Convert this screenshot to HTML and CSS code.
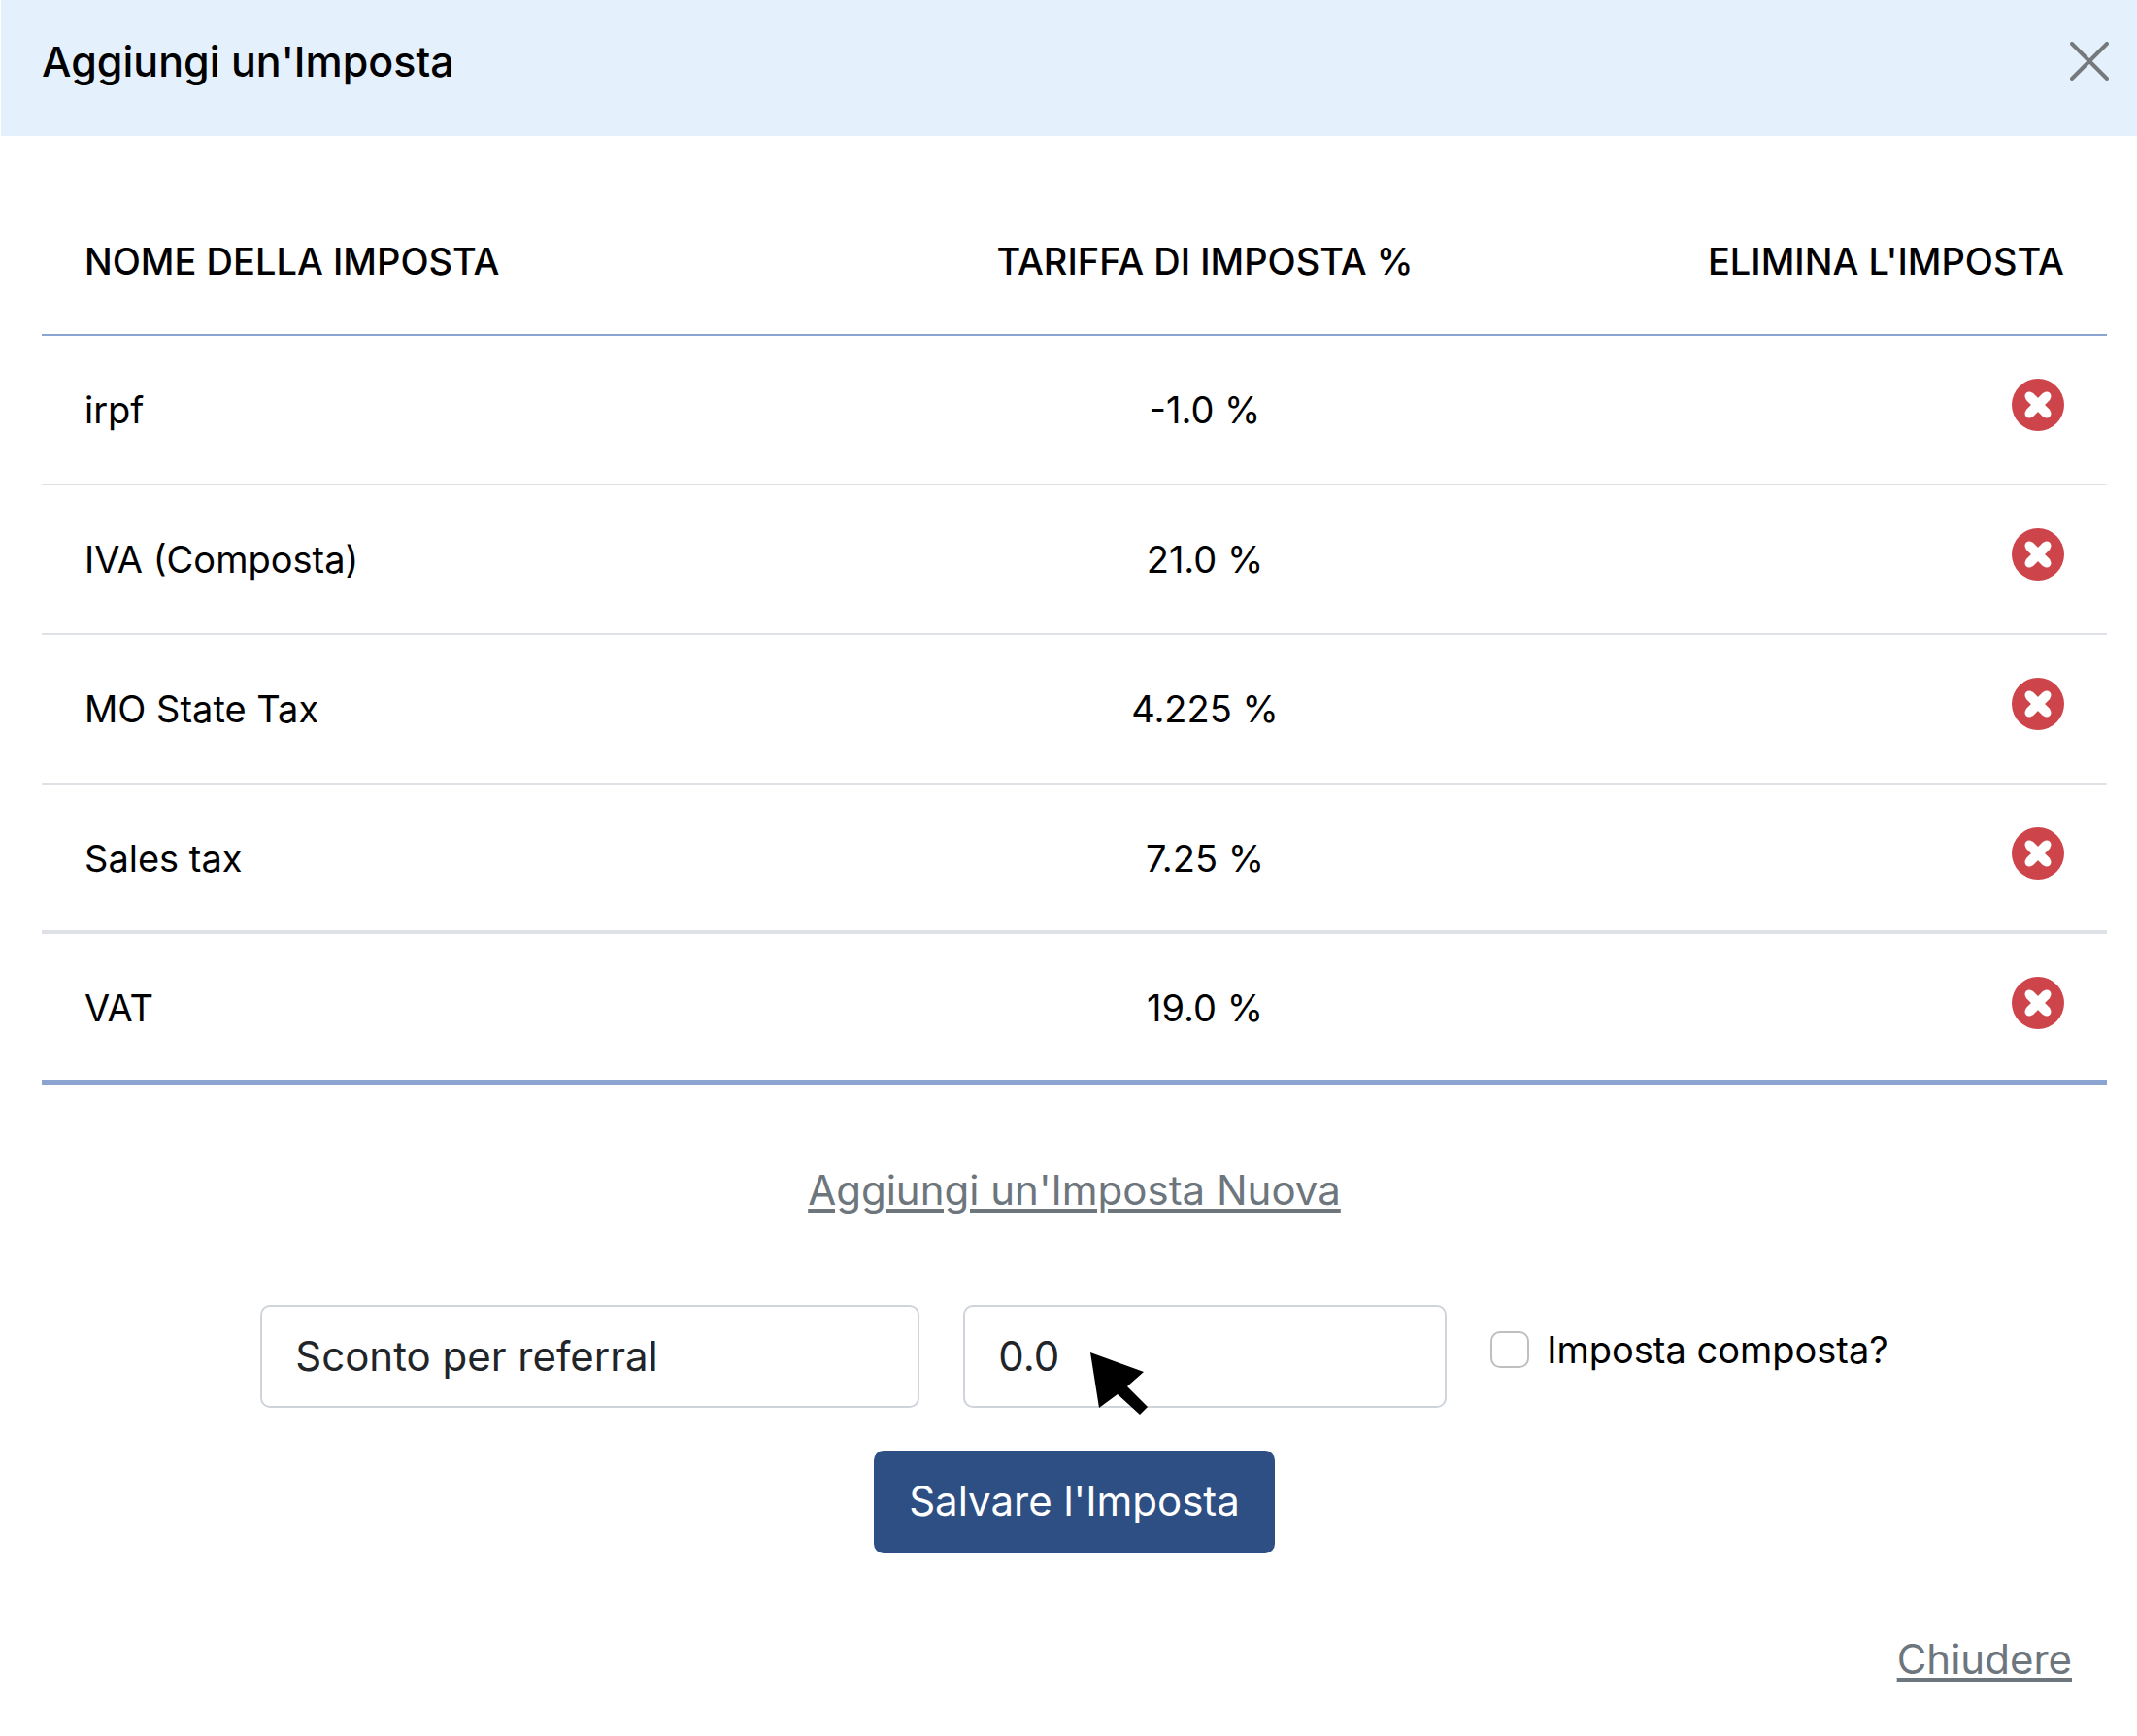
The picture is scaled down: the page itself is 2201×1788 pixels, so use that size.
FILE: index.html
```html
<!DOCTYPE html>
<html lang="it">
<head>
<meta charset="utf-8">
<meta name="viewport" content="width=device-width, initial-scale=1">
<title>Aggiungi un'Imposta</title>
<link rel="stylesheet" href="styles.css">
</head>
<body>
<svg class="sprite" aria-hidden="true">
  <symbol id="remove" viewBox="0 0 54 54">
    <circle cx="27" cy="27" r="27" fill="#cd444a"/>
    <path d="M18 18L36 36M36 18L18 36" stroke="#fff" stroke-width="10"/>
    <path d="M18 18L36 36M36 18L18 36" stroke="#fff" stroke-width="9" stroke-linecap="round"/>
  </symbol>
</svg>
<main class="dialog">
  <header class="dialog-header">
    <h1 class="dialog-title">Aggiungi un'Imposta</h1>
    <button class="close" type="button" aria-label="Chiudi">
      <svg class="close-icon" viewBox="0 0 40 40"><path d="M2 2L38 38M38 2L2 38" stroke="#76797c" stroke-width="4" stroke-linecap="round"/></svg>
    </button>
  </header>
  <div class="dialog-body">
    <table class="taxes">
      <thead>
        <tr><th class="name" scope="col">NOME DELLA IMPOSTA</th><th class="rate" scope="col">TARIFFA DI IMPOSTA %</th><th class="action" scope="col">ELIMINA L'IMPOSTA</th></tr>
      </thead>
      <tbody>
        <tr><td class="name">irpf</td><td class="rate">-1.0 %</td><td class="action"><button class="remove" type="button" aria-label="Elimina irpf"><svg class="remove-icon"><use href="#remove"/></svg></button></td></tr>
        <tr><td class="name">IVA (Composta)</td><td class="rate">21.0 %</td><td class="action"><button class="remove" type="button" aria-label="Elimina IVA"><svg class="remove-icon"><use href="#remove"/></svg></button></td></tr>
        <tr><td class="name">MO State Tax</td><td class="rate">4.225 %</td><td class="action"><button class="remove" type="button" aria-label="Elimina MO State Tax"><svg class="remove-icon"><use href="#remove"/></svg></button></td></tr>
        <tr><td class="name">Sales tax</td><td class="rate">7.25 %</td><td class="action"><button class="remove" type="button" aria-label="Elimina Sales tax"><svg class="remove-icon"><use href="#remove"/></svg></button></td></tr>
        <tr><td class="name">VAT</td><td class="rate">19.0 %</td><td class="action"><button class="remove" type="button" aria-label="Elimina VAT"><svg class="remove-icon"><use href="#remove"/></svg></button></td></tr>
      </tbody>
    </table>
    <a class="link" href="#nuova">Aggiungi un'Imposta Nuova</a>
    <form class="new-tax" id="nuova">
      <div class="fields">
        <input class="field field-name" type="text" aria-label="Nome della imposta" value="Sconto per referral">
        <div class="field-rate">
          <input class="field" type="text" inputmode="decimal" aria-label="Tariffa di imposta" value="0.0">
          <svg class="pointer" viewBox="0 0 60 65" aria-hidden="true"><path d="M0 0L55 20L38 35L59 56L51 64L28 43L9 57Z"/></svg>
        </div>
        <div class="check">
          <input class="checkbox" type="checkbox" id="compound">
          <label for="compound">Imposta composta?</label>
        </div>
      </div>
      <button class="save" type="button">Salvare l'Imposta</button>
    </form>
  </div>
  <footer class="dialog-footer">
    <a class="link" href="#chiudi">Chiudere</a>
  </footer>
</main>
</body>
</html>
```
FILE: styles.css
```css
*, *::before, *::after { box-sizing: border-box; }

body {
  margin: 0;
  background: #fff;
  color: #000;
  font-family: Inter, "Liberation Sans", sans-serif;
  font-size: 38px;
  font-optical-sizing: none;
  line-height: 48px;
}

button, input { font: inherit; }

.sprite { display: none; }

.dialog { padding-left: 1px; }

.dialog-header {
  display: flex;
  align-items: flex-start;
  justify-content: space-between;
  height: 140px;
  padding: 36px 29px 0 42px;
  background: #e4f1fd;
}

.dialog-title {
  margin: 0;
  font-size: 43px;
  font-weight: 500;
  line-height: 54px;
}

.close, .remove {
  display: inline-flex;
  padding: 0;
  border: 0;
  background: none;
}

.close { padding-top: 7px; }
.close-icon { width: 40px; height: 40px; }

.dialog-body {
  display: flex;
  flex-direction: column;
  align-items: center;
  padding: 54px 31px 0 42px;
}

.taxes {
  width: 100%;
  table-layout: fixed;
  border-collapse: separate;
  border-spacing: 0;
}

.taxes th, .taxes td {
  height: 154px;
  padding: 0 44px;
  border-bottom: 2px solid #dee2e6;
  text-align: left;
  vertical-align: middle;
}

.taxes th {
  height: 152px;
  border-bottom-color: #8ba4d2;
  font-weight: 500;
}

.taxes tr:nth-child(4) td { padding-top: 2px; border-bottom-width: 4px; }
.taxes tr:nth-child(5) td { height: 155px; padding-top: 2px; border-bottom: 5px solid #8ba4d2; }

.taxes .rate { width: 898px; text-align: center; }
.taxes .action { width: 480px; text-align: right; }
.taxes td.action { padding-bottom: 10px; }

.remove { vertical-align: middle; }
.remove-icon { width: 54px; height: 54px; }

.link {
  color: #6d757d;
  font-size: 42px;
  line-height: 54px;
  text-decoration-thickness: 4px;
  text-underline-offset: 4px;
}

.dialog-body > .link { margin-top: 82px; }

.new-tax {
  display: flex;
  flex-direction: column;
  align-items: center;
  width: 100%;
  margin-top: 91px;
}

.fields {
  display: flex;
  justify-content: center;
  gap: 45px;
  width: 100%;
}

.field {
  width: 100%;
  height: 106px;
  padding: 0 34px 2px;
  border: 2px solid #ced4da;
  border-radius: 10px;
  background: #fff;
  color: #212529;
  font-size: 42px;
}

.field-name { flex: 0 1 679px; min-width: 0; }
.field-rate { position: relative; flex: 0 1 498px; }

.pointer {
  position: absolute;
  top: 49px;
  left: 131px;
  width: 60px;
  height: 65px;
}

.check {
  display: flex;
  align-items: flex-start;
  gap: 18px;
  padding-top: 22px;
  white-space: nowrap;
}

.checkbox {
  appearance: none;
  width: 40px;
  height: 38px;
  margin: 5px 0 0;
  border: 2px solid #bfbfbf;
  border-radius: 10px;
  background: #fff;
}

.save {
  height: 106px;
  margin-top: 44px;
  padding: 0 36px 2px;
  border: 0;
  border-radius: 10px;
  background: #2d4f83;
  color: #fff;
  font-size: 42px;
}

.dialog-footer {
  display: flex;
  justify-content: flex-end;
  padding: 82px 67px 52px 42px;
}
```
